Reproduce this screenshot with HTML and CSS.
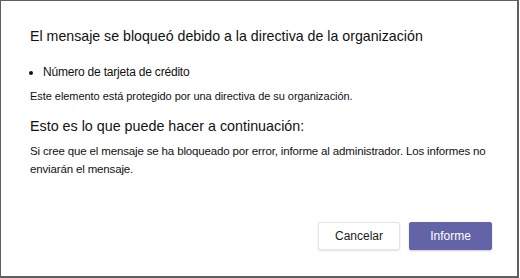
FILE: index.html
```html
<!DOCTYPE html>
<html lang="es">
<head>
<meta charset="utf-8">
<link rel="stylesheet" href="styles.css">
</head>
<body>
<div class="dialog">
  <h1 class="title">El mensaje se bloqueó debido a la directiva de la organización</h1>
  <ul class="items">
    <li>Número de tarjeta de crédito</li>
  </ul>
  <p class="note">Este elemento está protegido por una directiva de su organización.</p>
  <h2 class="subtitle">Esto es lo que puede hacer a continuación:</h2>
  <p class="body">Si cree que el mensaje se ha bloqueado por error, informe al administrador. Los informes no enviarán el mensaje.</p>
  <div class="actions">
    <button class="btn btn-secondary">Cancelar</button>
    <button class="btn btn-primary">Informe</button>
  </div>
</div>
</body>
</html>
```
FILE: styles.css
```css
html, body {
  margin: 0;
  padding: 0;
  background: #ffffff;
}
body {
  font-family: "Liberation Sans", Arial, sans-serif;
  color: #111111;
}
.dialog {
  box-sizing: border-box;
  width: 519px;
  height: 278px;
  border-left: 1px solid #5f5f5f;
  border-top: 1px solid #5f5f5f;
  border-right: 2px solid #5f5f5f;
  border-bottom: 2px solid #5f5f5f;
  padding: 0 25px 0 29px;
  display: flex;
  flex-direction: column;
}
.title {
  margin: 25px 0 0 0;
  font-size: 14.2px;
  line-height: 20px;
  font-weight: normal;
}
.items {
  margin: 18px 0 0 0;
  padding: 0 0 0 13px;
  font-size: 12px;
  line-height: 16px;
  letter-spacing: -0.2px;
}
.note {
  margin: 9px 0 0 0;
  font-size: 11px;
  line-height: 14px;
  letter-spacing: -0.05px;
}
.subtitle {
  margin: 13px 0 0 0;
  font-size: 14.3px;
  line-height: 20px;
  font-weight: normal;
}
.body {
  margin: 6px 0 0 0;
  font-size: 11.5px;
  line-height: 18px;
  letter-spacing: -0.15px;
}
.actions {
  margin-top: auto;
  margin-bottom: 26px;
  display: flex;
  justify-content: flex-end;
  gap: 9px;
}
.btn {
  box-sizing: border-box;
  height: 28px;
  font-family: "Liberation Sans", Arial, sans-serif;
  font-size: 12px;
  border-radius: 2px;
  padding: 0;
}
.btn-secondary {
  width: 82px;
  background: #ffffff;
  color: #1a1a1a;
  border: 1px solid #e6e6e6;
  box-shadow: 0 1px 2px rgba(0,0,0,0.12);
}
.btn-primary {
  width: 83px;
  background: #6264a7;
  color: #ffffff;
  border: 1px solid #6264a7;
  box-shadow: 0 1px 2px rgba(0,0,0,0.2);
}
```
